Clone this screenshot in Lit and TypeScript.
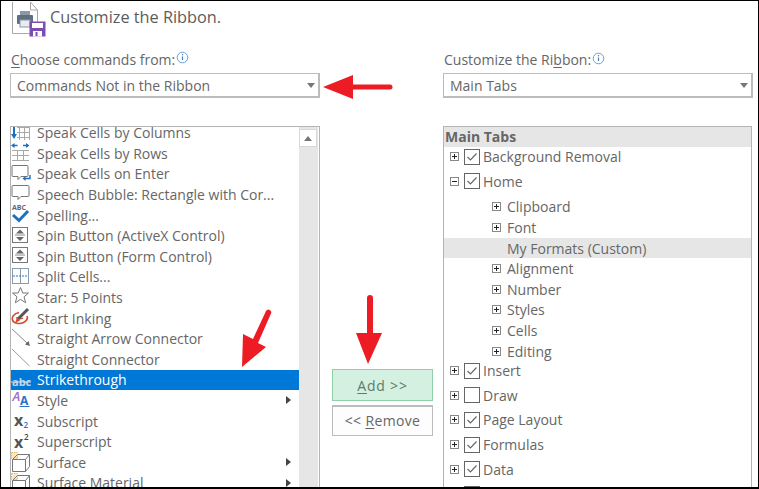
import { LitElement, html, css, svg } from "lit";
import { customElement } from "lit/decorators.js";

const ic = (body: unknown) =>
  html`<svg class="ic" width="22" height="20" viewBox="0 0 22 20">${body}</svg>`;

const spin = svg`<rect x="1.500" y="1.500" width="15" height="15" fill="#fff" stroke="#777"/><path d="M9 3.500l4 4H5z" fill="#666"/><path d="M4 9h10" stroke="#888"/><path d="M9 15l4-4H5z" fill="#666"/>`;
const cube = svg`<rect x=".5" y=".5" width="6" height="6" fill="#f8e8bc" stroke="#e2b860" stroke-dasharray="1.500 1"/><path d="M1.500 7.500h13v12h-13zM1.500 7.500l5-5h12l-4 5M14.500 19.500l4-5v-12" fill="none" stroke="#777"/>`;

const left: { t: string; i: unknown; sel?: boolean; sub?: boolean }[] = [
  { t: "Speak Cells by Columns", i: ic(svg`<path d="M8.500 0v17M13.500 0v17M18.500 0v17M6 4.500h13M6 9.500h13M6 14.500h13" stroke="#a8a8a8" fill="none"/><path d="M3 0v12" stroke="#1f6fc0" stroke-width="2"/><path d="M0 11h6l-3 5z" fill="#1f6fc0"/>`) },
  { t: "Speak Cells by Rows", i: ic(svg`<path d="M1 7.500h17M1 12.500h17M1 17.500h17M6.500 7v11M12.500 7v11" stroke="#a8a8a8" fill="none"/><path d="M3 2.500h3.500M12 2.500h3.500" stroke="#1f6fc0" stroke-width="1.300"/><path d="M0 2.500l3.500-2.500v5zM18.500 2.500l-3.500-2.500v5z" fill="#1f6fc0"/>`) },
  { t: "Speak Cells on Enter", i: ic(svg`<path d="M2 1.500h14a1 1 0 0 1 1 1v9a1 1 0 0 1-1 1h-6l-3 3v-3H2a1 1 0 0 1-1-1v-9a1 1 0 0 1 1-1z" fill="#fff" stroke="#777"/><path d="M19 11v3.500h-5" stroke="#1f6fc0" stroke-width="1.400" fill="none"/><path d="M11.500 14.500l3-2.500v5z" fill="#1f6fc0"/>`) },
  { t: "Speech Bubble: Rectangle with Cor...", i: ic(svg`<path d="M2 1.500h15a1 1 0 0 1 1 1v9a1 1 0 0 1-1 1h-7l-3 3v-3H2a1 1 0 0 1-1-1v-9a1 1 0 0 1 1-1z" fill="#fff" stroke="#777"/>`) },
  { t: "Spelling...", i: ic(svg`<text x="1" y="5" class="abc">ABC</text><path d="M2 10l6 5.500 9-9.500" stroke="#1f6fc0" stroke-width="3" fill="none"/>`) },
  { t: "Spin Button (ActiveX Control)", i: ic(spin) },
  { t: "Spin Button (Form Control)", i: ic(spin) },
  { t: "Split Cells...", i: ic(svg`<rect x="1.500" y="1.500" width="16" height="15" fill="#fff" stroke="#8a9ab0"/><path d="M9.500 1.500v15" stroke="#8a9ab0"/><path d="M2 9h15" stroke="#2a70c8" stroke-dasharray="2 1"/>`) },
  { t: "Star: 5 Points", i: ic(svg`<path d="M9.500 .5l2.300 5.500h5.700l-4.500 3.800 1.700 6-5.200-3.400-5.200 3.400 1.700-6-4.500-3.800h5.700z" fill="#fff" stroke="#777"/>`) },
  { t: "Start Inking", i: ic(svg`<path d="M8 4.500C3 5.500 .5 9 1.500 12c1 3.500 7 4.500 11 2.500 3-1.500 4.500-4 3.500-6.500" fill="none" stroke="#d8492c" stroke-width="1.600"/><path d="M5 9.500c2 1.500 5 1.500 7 .5" fill="none" stroke="#d8492c" stroke-width="1.200"/><path d="M7 11L17 1" stroke="#555" stroke-width="3"/><path d="M4 15l2-5.500 3 3z" fill="#d8492c"/>`) },
  { t: "Straight Arrow Connector", i: ic(svg`<path d="M1 0l15 14" stroke="#888" fill="none"/><path d="M19 17l-1.500-5-3.500 3.500z" fill="#666"/>`) },
  { t: "Straight Connector", i: ic(svg`<path d="M1 0l17.500 17" stroke="#999" fill="none"/>`) },
  { t: "Strikethrough", sel: true, i: ic(svg`<text x="1" y="15.500" class="strike">abc</text><path d="M0 12h20" stroke="#d4e2f2"/>`) },
  { t: "Style", sub: true, i: ic(svg`<text x="1.500" y="11" class="sa">A</text><text x="9" y="15" class="sb">A</text><path d="M8.500 16.500h10" stroke="#2a70c8"/>`) },
  { t: "Subscript", i: ic(svg`<text x="3" y="15" class="sx">x</text><text x="12.500" y="17" class="sn">2</text>`) },
  { t: "Superscript", i: ic(svg`<text x="3" y="16" class="sx">x</text><text x="13" y="8" class="sn k">2</text>`) },
  { t: "Surface", sub: true, i: ic(cube) },
  { t: "Surface Material", sub: true, i: ic(cube) },
];

type Node = { t: string; on?: boolean; open?: boolean; kids?: { t: string; hi?: boolean; leaf?: boolean }[] };
const tree: Node[] = [
  { t: "Background Removal", on: true },
  {
    t: "Home", on: true, open: true,
    kids: [
      { t: "Clipboard" }, { t: "Font" }, { t: "My Formats (Custom)", hi: true, leaf: true },
      { t: "Alignment" }, { t: "Number" }, { t: "Styles" }, { t: "Cells" }, { t: "Editing" },
    ],
  },
  { t: "Insert", on: true }, { t: "Draw" }, { t: "Page Layout", on: true },
  { t: "Formulas", on: true }, { t: "Data", on: true }, { t: "", on: true },
];

const info = html`<svg class="info" width="13" height="14" viewBox="0 0 13 14"><circle cx="6.500" cy="7.500" r="5.300" fill="#fff" stroke="#6a9fd6"/><path d="M6.500 6.500v3.500" stroke="#3f7fc4" stroke-width="1.200"/><path d="M6.500 4v1.300" stroke="#3f7fc4" stroke-width="1.200"/></svg>`;
const pm = (open: boolean) => html`<svg class="pm" width="9" height="9" viewBox="0 0 9 9"><rect x=".5" y=".5" width="8" height="8" fill="#fff" stroke="#888"/><path d=${open ? "M2 4.500h5" : "M2 4.500h5M4.500 2v5"} stroke="#222"/></svg>`;
const cb = (on?: boolean) => html`<svg class="cb" width="16" height="16" viewBox="0 0 16 16"><rect x=".5" y=".5" width="15" height="15" fill="#fff" stroke="#666"/>${on ? svg`<path d="M3.500 8l3 3 6-6.500" stroke="#666" stroke-width="1.200" fill="none"/>` : ""}</svg>`;

@customElement("app-root")
export class AppRoot extends LitElement {
  static styles = css`
    :host { display: block; width: 759px; height: 489px; }
    .frame {
      position: relative; box-sizing: border-box; width: 759px; height: 489px; overflow: hidden; background: #fff;
      border-top: 1px solid #000; border-left: 1px solid #000; border-right: 1px solid #000; border-bottom: 2px solid #000;
      font-family: "Open Sans", "Noto Sans", sans-serif; font-size: 14px; color: #666;
      padding: 1px 0 0 9px; display: flex; flex-direction: column;
    }
    .head { display: flex; align-items: flex-start; height: 48px; margin-left: 2px; }
    .head svg { flex: none; }
    .title { font-size: 16.300px; margin: 3px 0 0 4px; line-height: 24px; color: #5c5c5c; }
    .cols { display: flex; flex: 1; min-height: 0; }
    .col { width: 310px; flex: none; display: flex; flex-direction: column; }
    .col.r { margin-left: 123px; width: 309px; }
    .lab { height: 23px; line-height: 20px; display: flex; align-items: flex-start; padding-left: 1px; white-space: pre; }
    .info { margin: 0 0 0 1px; flex: none; }
    .r .info { margin-top: 1px; margin-left: 1px; }
    .sel {
      box-sizing: border-box; height: 25px; border: 1px solid #bcbcbc; border-bottom-width: 2px; border-right-width: 2px;
      display: flex; align-items: center; justify-content: space-between; padding: 0 3px 0 6px; color: #666;
    }
    .r .sel { width: 310px; }
    .caret { width: 0; height: 0; border: 4.500px solid transparent; border-top: 5px solid #777; border-bottom: 0; }
    .list { flex: 1; min-height: 0; margin-top: 28px; box-sizing: border-box; border: 1px solid #b4b4b4; border-bottom: 0; overflow: hidden; display: flex; }
    .rows { flex: 1; min-width: 0; margin-top: -4.600px; }
    .row { height: 20.600px; display: flex; align-items: center; position: relative; color: #666; white-space: nowrap; }
    .row.sel-row { background: #0078d7; color: #fff; }
    .ic { flex: none; width: 22px; overflow: visible; margin-left: 0; margin-right: 4px; }
    .ic text { font-family: "Open Sans", sans-serif; }
    .abc { font-size: 7px; font-weight: 700; fill: #666; }
    .strike { font-size: 11px; font-weight: 700; fill: #c0d4ec; }
    .sa { font-size: 13px; font-style: italic; fill: #9a6cc8; font-weight: 600; }
    .sb { font-size: 12px; font-weight: 700; fill: #2a70c8; }
    .sx { font-size: 16px; font-weight: 700; fill: #555; }
    .sn { font-size: 8px; fill: #2a70c8; font-weight: 600; }
    .sn.k { fill: #444; }
    .sub { position: absolute; left: 275px; top: 6px; width: 0; height: 0; border: 4px solid transparent; border-left: 5px solid #444; border-right: 0; }
    .scroll { flex: none; width: 19px; background: #e6e6e6; margin-right: 1px; padding-top: 2px; }
    .up { width: 18px; height: 18px; box-sizing: border-box; background: #fff; border: 1px solid #d8d8d8; display: flex; align-items: center; justify-content: center; }
    .up i { width: 0; height: 0; border: 4.500px solid transparent; border-bottom: 5px solid #777; border-top: 0; }
    .tree { flex: 1; min-width: 0; display: flex; flex-direction: column; }
    .band { height: 20px; flex: none; background: #e6e6e6; font-weight: 700; padding-left: 1px; line-height: 20px; color: #666; }
    .top { height: 24.600px; flex: none; display: flex; align-items: center; padding-left: 6px; }
    .top .cb { margin-left: 5px; margin-right: 3px; }
    .first { margin-top: -2.500px; }
    .kids { margin: 3px 0 -3px; }
    .kid { height: 20.600px; display: flex; align-items: center; padding-left: 48px; }
    .kid .pm { margin-right: 6px; }
    .kid.leaf { padding-left: 63px; }
    .kid.hi { background: #e6e6e6; }
    .mid { position: absolute; left: 331px; top: 368px; width: 101px; display: flex; flex-direction: column; gap: 4px; }
    .btn { box-sizing: border-box; height: 31px; padding-bottom: 1px; letter-spacing: .35px; display: flex; align-items: center; justify-content: center; border: 1px solid #bcbcbc; background: #fdfdfd; color: #666; border-width: 2px 1px 1px 1px; white-space: pre; }
    .btn.add { background: #d3f0e0; border: 1px solid #90cfa8; color: #5f7a6a; height: 32px; padding-bottom: 0; letter-spacing: .8px; }
    u { text-underline-offset: 2px; }
    .arrows { position: absolute; left: -1px; top: -1px; pointer-events: none; }
  `;

  render() {
    return html`<div class="frame">
      <div class="head">
        <svg width="34" height="36" viewBox="0 0 34 36">
          <path d="M.5 0v31.500h25V8l-7-8" fill="#fff" stroke="#a8a8a8"/>
          <path d="M18.500 0v8h7" fill="none" stroke="#a8a8a8"/>
          <rect x="8" y="9" width="10" height="5" fill="#8a98a8"/>
          <rect x="5" y="13" width="16" height="9" rx="1" fill="#5d6f80"/>
          <rect x="8" y="18" width="10" height="7" fill="#e8edf2" stroke="#8a98a8"/>
          <rect x="17.500" y="19.500" width="16" height="15" fill="#7c4db0"/>
          <rect x="20" y="21" width="11" height="5" fill="#fff"/>
          <rect x="21" y="29" width="9" height="5.500" fill="#fff"/>
          <rect x="23.500" y="30" width="2" height="4" fill="#7c4db0"/>
        </svg>
        <div class="title">Customize the Ribbon.</div>
      </div>
      <div class="cols">
        <div class="col">
          <div class="lab"><span><u>C</u>hoose commands from:</span>${info}</div>
          <div class="sel">Commands Not in the Ribbon<i class="caret"></i></div>
          <div class="list">
            <div class="rows">
              ${left.map(
                (r) => html`<div class="row ${r.sel ? "sel-row" : ""}">${r.i}<span>${r.t}</span>${r.sub ? html`<i class="sub"></i>` : ""}</div>`
              )}
            </div>
            <div class="scroll"><div class="up"><i></i></div></div>
          </div>
        </div>
        <div class="col r">
          <div class="lab"><span>Customize the Ri<u>b</u>bon:</span>${info}</div>
          <div class="sel">Main Tabs<i class="caret"></i></div>
          <div class="list">
            <div class="tree">
              <div class="band">Main Tabs</div>
              ${tree.map(
                (n, idx) => html`<div class="top ${idx === 0 ? "first" : ""}">${pm(!!n.open)}${cb(n.on)}<span>${n.t}</span></div>
                  ${n.kids
                    ? html`<div class="kids">
                        ${n.kids.map(
                          (k) => html`<div class="kid ${k.hi ? "hi" : ""} ${k.leaf ? "leaf" : ""}">${k.leaf ? "" : pm(false)}<span>${k.t}</span></div>`
                        )}
                      </div>`
                    : ""}`
              )}
            </div>
          </div>
        </div>
      </div>
      <div class="mid">
        <div class="btn add"><span><u>A</u>dd &gt;&gt;</span></div>
        <div class="btn"><span>&lt;&lt; <u>R</u>emove</span></div>
      </div>
      <svg class="arrows" width="759" height="489" viewBox="0 0 759 489">
        <g fill="#ed1c24" stroke="none">
          <path d="M323 87L353 75V84.500H390a2.500 2.500 0 0 1 0 5H353V99z"/>
          <path d="M242 367L243 334L253 339L266 311a2.800 2.800 0 0 1 5 2.500L258 343L266 347z"/>
          <path d="M368 364L356 333H367V298a3 3 0 0 1 6 0V333H382z"/>
        </g>
      </svg>
    </div>`;
  }
}
